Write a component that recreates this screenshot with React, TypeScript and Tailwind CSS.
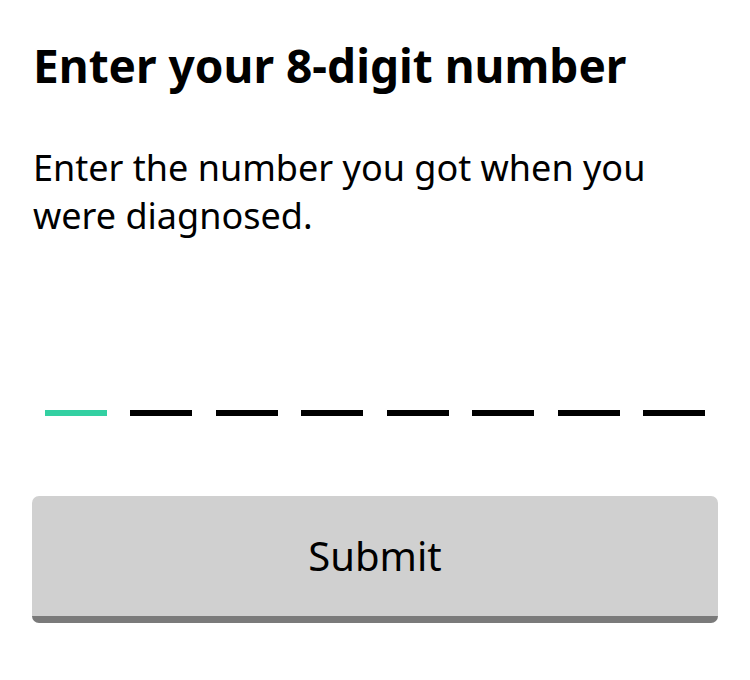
import React, { useState } from 'react';

const App: React.FC = () => {
  const [digits] = useState<string[]>(Array(8).fill(''));
  const active = 0;

  return (
    <div className="min-h-screen bg-white text-black font-['Noto_Sans',sans-serif] px-[33px] pt-[38px]">
      <h1 className="text-[46px] leading-[55px] font-bold">Enter your 8-digit number</h1>
      <p className="mt-[51px] text-[36px] leading-[48px]">
        Enter the number you got when you were diagnosed.
      </p>

      {/* digit slots */}
      <div className="mt-[170px] grid grid-cols-8 w-[684px]">
        {digits.map((d, i) => (
          <div key={i} className="flex justify-center">
            <div className={`w-[62px] h-[6px] ${i === active ? 'bg-[#33d0a2]' : 'bg-black'}`} />
          </div>
        ))}
      </div>

      <button className="mt-[80px] -ml-px w-[686px] h-[127px] rounded-[7px] bg-[#d0d0d0] border-b-[7px] border-[#7a7a7a] text-[40px] text-black">
        Submit
      </button>
    </div>
  );
};

export default App;
